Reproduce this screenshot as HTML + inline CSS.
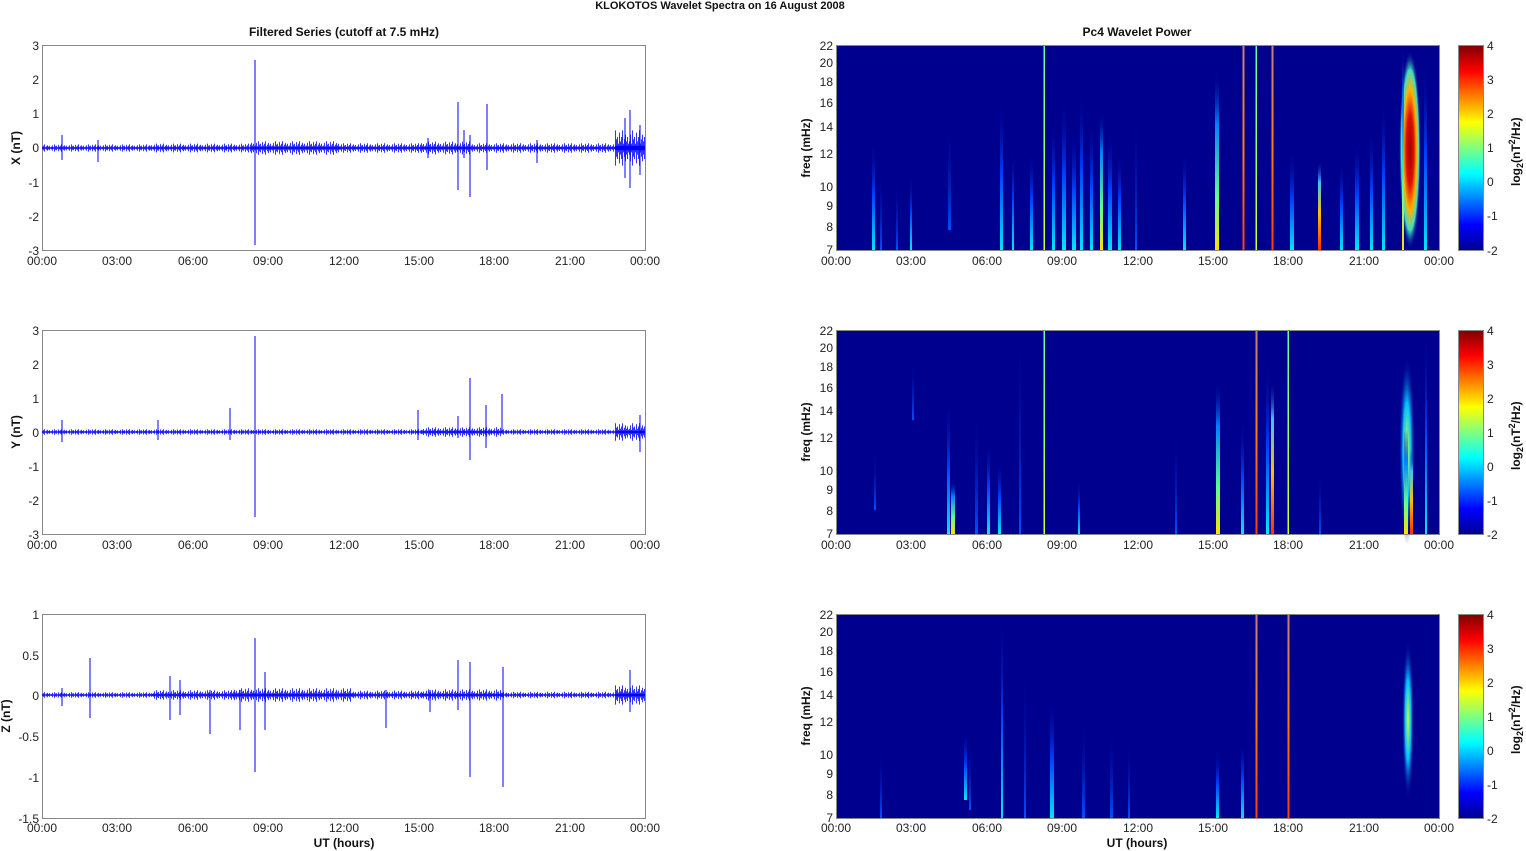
<!DOCTYPE html>
<html><head><meta charset="utf-8">
<style>
html,body{margin:0;padding:0;background:#fff;}
svg{display:block;font-family:"Liberation Sans",Arial,sans-serif;}
.t{font-size:12px;fill:#222;}
.b{font-size:12px;font-weight:bold;fill:#111;}
</style></head><body>
<svg width="1526" height="851" viewBox="0 0 1526 851" xmlns="http://www.w3.org/2000/svg">
<defs>
<pattern id="nz" x="0" y="-15" width="17" height="30" patternUnits="userSpaceOnUse">
<path stroke="#0000ff" stroke-width="0.8" fill="none" d="M0.5,12V18 M1.5,9V21 M2.5,13V17 M3.5,7V23 M4.5,11V19 M5.5,10V20 M6.5,13V17 M7.5,8V22 M8.5,12V18 M9.5,10V20 M10.5,7V23 M11.5,13V17 M12.5,11V19 M13.5,9V21 M14.5,12V18 M15.5,10V20 M16.5,13V17"/>
<rect x="0" y="14" width="17" height="2" fill="#0000ff"/>
</pattern>
<linearGradient id="gc" x1="0" y1="0" x2="0" y2="1"><stop offset="0" stop-color="#00008f" stop-opacity="0"/><stop offset="0.5" stop-color="#0040ff"/><stop offset="1" stop-color="#00e8ff"/></linearGradient>
<linearGradient id="gb" x1="0" y1="0" x2="0" y2="1"><stop offset="0" stop-color="#00008f" stop-opacity="0"/><stop offset="1" stop-color="#0050ff"/></linearGradient>
<linearGradient id="gy" x1="0" y1="0" x2="0" y2="1"><stop offset="0" stop-color="#00008f" stop-opacity="0"/><stop offset="0.3" stop-color="#0080ff"/><stop offset="0.7" stop-color="#60ff90"/><stop offset="1" stop-color="#ffe000"/></linearGradient>
<linearGradient id="gr" x1="0" y1="0" x2="0" y2="1"><stop offset="0" stop-color="#00008f" stop-opacity="0"/><stop offset="0.25" stop-color="#40c0ff"/><stop offset="0.6" stop-color="#ffc000"/><stop offset="1" stop-color="#ff3000"/></linearGradient>
<linearGradient id="gl" x1="0" y1="0" x2="0" y2="1"><stop offset="0" stop-color="#60ffa0"/><stop offset="1" stop-color="#d0ff30"/></linearGradient>
<linearGradient id="glr" x1="0" y1="0" x2="0" y2="1"><stop offset="0" stop-color="#c08080"/><stop offset="0.5" stop-color="#ff8000"/><stop offset="1" stop-color="#ff4000"/></linearGradient>
<radialGradient id="gblob" cx="0.5" cy="0.5" r="0.5"><stop offset="0" stop-color="#a00000"/><stop offset="0.35" stop-color="#e01000"/><stop offset="0.6" stop-color="#ffb000"/><stop offset="0.8" stop-color="#40e0c0"/><stop offset="1" stop-color="#00008f" stop-opacity="0"/></radialGradient>
<radialGradient id="gblobc" cx="0.5" cy="0.5" r="0.5"><stop offset="0" stop-color="#c0ff40"/><stop offset="0.5" stop-color="#00c0ff"/><stop offset="1" stop-color="#00008f" stop-opacity="0"/></radialGradient>
<linearGradient id="jet" x1="0" y1="1" x2="0" y2="0"><stop offset="0" stop-color="#00008f"/><stop offset="0.125" stop-color="#0000ff"/><stop offset="0.375" stop-color="#00ffff"/><stop offset="0.625" stop-color="#ffff00"/><stop offset="0.875" stop-color="#ff0000"/><stop offset="1" stop-color="#800000"/></linearGradient>
</defs>

<text x="720" y="9" text-anchor="middle" style="font-size:11px;font-weight:bold;fill:#111">KLOKOTOS Wavelet Spectra on 16 August    2008</text>
<text x="344" y="36" text-anchor="middle" class="b">Filtered Series (cutoff at 7.5 mHz)</text>
<text x="1137" y="36" text-anchor="middle" class="b">Pc4 Wavelet Power</text>

<g stroke="#888" fill="none" stroke-width="1">
<rect x="42.5" y="45.5" width="603" height="205"/>
<rect x="42.5" y="330.5" width="603" height="204"/>
<rect x="42.5" y="614.5" width="603" height="204"/>
</g>
<!-- panel 1 -->
<g transform="translate(0,148)">
<g transform="scale(1,0.45)"><rect x="42" y="-15" width="108" height="30" fill="url(#nz)"/></g>
<g transform="scale(1,0.55)"><rect x="150" y="-15" width="100" height="30" fill="url(#nz)"/></g>
<g transform="scale(1,0.85)"><rect x="250" y="-15" width="90" height="30" fill="url(#nz)"/></g>
<g transform="scale(1,0.6)"><rect x="340" y="-15" width="80" height="30" fill="url(#nz)"/></g>
<g transform="scale(1,0.8)"><rect x="420" y="-15" width="50" height="30" fill="url(#nz)"/></g>
<g transform="scale(1,0.6)"><rect x="470" y="-15" width="145" height="30" fill="url(#nz)"/></g>
<g transform="scale(1,2.2)"><rect x="615" y="-15" width="30" height="30" fill="url(#nz)"/></g>
</g>
<path fill="none" stroke="#0000ff" stroke-width="1" d="M255,60V245 M62,135V160 M98,140V162 M458,102V190 M470,135V197 M487,104V170 M464,130V158 M428,138V158 M537,140V163 M630,110V188 M625,118V178 M640,125V175"/>
<!-- panel 2 -->
<g transform="translate(0,432)">
<g transform="scale(1,0.35)"><rect x="42" y="-15" width="380" height="30" fill="url(#nz)"/></g>
<g transform="scale(1,0.6)"><rect x="422" y="-15" width="80" height="30" fill="url(#nz)"/></g>
<g transform="scale(1,0.35)"><rect x="502" y="-15" width="113" height="30" fill="url(#nz)"/></g>
<g transform="scale(1,1.1)"><rect x="615" y="-15" width="30" height="30" fill="url(#nz)"/></g>
</g>
<path fill="none" stroke="#0000ff" stroke-width="1" d="M255,336V517 M62,420V442 M158,420V440 M230,408V440 M470,378V460 M486,405V448 M502,394V432 M418,410V440 M458,416V438 M640,415V452"/>
<!-- panel 3 -->
<g transform="translate(0,695)">
<g transform="scale(1,0.35)"><rect x="42" y="-15" width="110" height="30" fill="url(#nz)"/></g>
<g transform="scale(1,0.6)"><rect x="152" y="-15" width="80" height="30" fill="url(#nz)"/></g>
<g transform="scale(1,0.85)"><rect x="232" y="-15" width="120" height="30" fill="url(#nz)"/></g>
<g transform="scale(1,0.55)"><rect x="352" y="-15" width="70" height="30" fill="url(#nz)"/></g>
<g transform="scale(1,0.7)"><rect x="422" y="-15" width="80" height="30" fill="url(#nz)"/></g>
<g transform="scale(1,0.4)"><rect x="502" y="-15" width="113" height="30" fill="url(#nz)"/></g>
<g transform="scale(1,1.2)"><rect x="615" y="-15" width="30" height="30" fill="url(#nz)"/></g>
</g>
<path fill="none" stroke="#0000ff" stroke-width="1" d="M255,638V772 M90,658V718 M62,688V706 M170,676V720 M180,680V715 M210,690V734 M240,690V730 M265,672V730 M458,660V710 M470,662V777 M503,667V787 M430,690V712 M386,690V728 M630,670V712"/>

<g class="t" text-anchor="middle">
<text x="42" y="265">00:00</text><text x="117" y="265">03:00</text><text x="193" y="265">06:00</text><text x="268" y="265">09:00</text><text x="344" y="265">12:00</text><text x="419" y="265">15:00</text><text x="494" y="265">18:00</text><text x="570" y="265">21:00</text><text x="645" y="265">00:00</text>
<text x="42" y="549">00:00</text><text x="117" y="549">03:00</text><text x="193" y="549">06:00</text><text x="268" y="549">09:00</text><text x="344" y="549">12:00</text><text x="419" y="549">15:00</text><text x="494" y="549">18:00</text><text x="570" y="549">21:00</text><text x="645" y="549">00:00</text>
<text x="42" y="832">00:00</text><text x="117" y="832">03:00</text><text x="193" y="832">06:00</text><text x="268" y="832">09:00</text><text x="344" y="832">12:00</text><text x="419" y="832">15:00</text><text x="494" y="832">18:00</text><text x="570" y="832">21:00</text><text x="645" y="832">00:00</text>
</g>
<g class="t" text-anchor="end">
<text x="39" y="50">3</text><text x="39" y="84">2</text><text x="39" y="118">1</text><text x="39" y="152">0</text><text x="39" y="187">-1</text><text x="39" y="221">-2</text><text x="39" y="255">-3</text>
<text x="39" y="335">3</text><text x="39" y="369">2</text><text x="39" y="403">1</text><text x="39" y="437">0</text><text x="39" y="471">-1</text><text x="39" y="505">-2</text><text x="39" y="539">-3</text>
<text x="39" y="619">1</text><text x="39" y="660">0.5</text><text x="39" y="700">0</text><text x="39" y="741">-0.5</text><text x="39" y="782">-1</text><text x="39" y="823">-1.5</text>
</g>
<text class="b" transform="translate(20,148) rotate(-90)" text-anchor="middle">X (nT)</text>
<text class="b" transform="translate(20,432) rotate(-90)" text-anchor="middle">Y (nT)</text>
<text class="b" transform="translate(10,716) rotate(-90)" text-anchor="middle">Z (nT)</text>
<text class="b" x="344" y="847" text-anchor="middle">UT (hours)</text>
<text class="b" x="1137" y="847" text-anchor="middle">UT (hours)</text>

<!-- RIGHT PANELS -->
<rect x="836" y="45" width="603" height="205" fill="#00008f"/>
<rect x="872" y="140" width="3" height="110" fill="url(#gc)"/>
<rect x="880" y="170" width="2" height="80" fill="url(#gb)"/>
<rect x="896" y="180" width="2" height="70" fill="url(#gb)"/>
<rect x="910" y="175" width="2" height="75" fill="url(#gc)"/>
<rect x="948" y="120" width="3" height="110" fill="url(#gb)"/>
<rect x="1000" y="100" width="3" height="150" fill="url(#gc)"/>
<rect x="1012" y="150" width="2" height="100" fill="url(#gc)"/>
<rect x="1030" y="150" width="3" height="100" fill="url(#gc)"/>
<rect x="1043.5" y="45" width="1.5" height="205" fill="url(#gl)"/>
<rect x="1052" y="120" width="3" height="130" fill="url(#gc)"/>
<rect x="1062" y="100" width="4" height="150" fill="url(#gc)"/>
<rect x="1072" y="130" width="4" height="120" fill="url(#gc)"/>
<rect x="1080" y="90" width="3" height="160" fill="url(#gc)"/>
<rect x="1090" y="120" width="3" height="130" fill="url(#gc)"/>
<rect x="1100" y="110" width="3" height="140" fill="url(#gy)"/>
<rect x="1108" y="130" width="4" height="120" fill="url(#gc)"/>
<rect x="1118" y="150" width="3" height="100" fill="url(#gc)"/>
<rect x="1135" y="110" width="2" height="140" fill="url(#gb)"/>
<rect x="1183" y="150" width="3" height="100" fill="url(#gc)"/>
<rect x="1215" y="70" width="4" height="180" fill="url(#gy)"/>
<rect x="1242.5" y="45" width="2" height="205" fill="url(#glr)"/>
<rect x="1255.5" y="45" width="1.5" height="205" fill="url(#gl)"/>
<rect x="1271.5" y="45" width="2" height="205" fill="url(#glr)"/>
<rect x="1290" y="150" width="4" height="100" fill="url(#gc)"/>
<rect x="1318" y="160" width="3" height="90" fill="url(#gr)"/>
<rect x="1340" y="160" width="3" height="90" fill="url(#gc)"/>
<rect x="1355" y="140" width="4" height="110" fill="url(#gc)"/>
<rect x="1370" y="130" width="3" height="120" fill="url(#gc)"/>
<rect x="1382" y="100" width="3" height="150" fill="url(#gc)"/>
<ellipse cx="1410" cy="150" rx="11" ry="100" fill="url(#gblob)"/>
<rect x="1402" y="45" width="2" height="205" fill="url(#gy)"/>
<rect x="1424" y="60" width="3" height="190" fill="url(#gc)"/>

<rect x="836" y="330" width="603" height="204" fill="#00008f"/>
<rect x="874" y="450" width="2" height="60" fill="url(#gb)"/>
<rect x="912" y="360" width="2" height="60" fill="url(#gb)"/>
<rect x="947" y="400" width="3" height="134" fill="url(#gc)"/>
<rect x="951" y="480" width="4" height="54" fill="url(#gy)"/>
<rect x="975" y="410" width="3" height="124" fill="url(#gb)"/>
<rect x="987" y="440" width="3" height="94" fill="url(#gc)"/>
<rect x="998" y="460" width="3" height="74" fill="url(#gc)"/>
<rect x="1019" y="330" width="2" height="204" fill="url(#gb)"/>
<rect x="1043.5" y="330" width="1.5" height="204" fill="url(#gl)"/>
<rect x="1078" y="480" width="2" height="54" fill="url(#gc)"/>
<rect x="1175" y="430" width="2" height="104" fill="url(#gb)"/>
<rect x="1216" y="380" width="4" height="154" fill="url(#gy)"/>
<rect x="1241" y="420" width="3" height="114" fill="url(#gc)"/>
<rect x="1255.5" y="330" width="2" height="204" fill="url(#glr)"/>
<rect x="1266" y="360" width="3" height="174" fill="url(#gc)"/>
<rect x="1271" y="380" width="3" height="154" fill="url(#gr)"/>
<rect x="1287.5" y="330" width="1.5" height="204" fill="url(#gl)"/>
<rect x="1319" y="470" width="2" height="64" fill="url(#gb)"/>
<ellipse cx="1407" cy="450" rx="8" ry="95" fill="url(#gblobc)"/>
<rect x="1404" y="430" width="4" height="104" fill="url(#gy)"/>
<rect x="1410" y="450" width="3" height="84" fill="url(#gr)"/>
<rect x="1425" y="330" width="2" height="204" fill="url(#gc)"/>

<rect x="836" y="614" width="603" height="204" fill="#00008f"/>
<rect x="880" y="750" width="2" height="68" fill="url(#gb)"/>
<rect x="964" y="730" width="3" height="70" fill="url(#gc)"/>
<rect x="969" y="740" width="2" height="70" fill="url(#gb)"/>
<rect x="1001" y="614" width="2" height="204" fill="url(#gc)"/>
<rect x="1024" y="670" width="2" height="148" fill="url(#gb)"/>
<rect x="1050" y="700" width="4" height="118" fill="url(#gc)"/>
<rect x="1082" y="720" width="3" height="98" fill="url(#gb)"/>
<rect x="1110" y="730" width="3" height="88" fill="url(#gb)"/>
<rect x="1128" y="740" width="2" height="78" fill="url(#gb)"/>
<rect x="1216" y="750" width="3" height="68" fill="url(#gc)"/>
<rect x="1241" y="740" width="3" height="78" fill="url(#gc)"/>
<rect x="1255.5" y="614" width="2" height="204" fill="url(#glr)"/>
<rect x="1287.5" y="614" width="2" height="204" fill="url(#glr)"/>
<ellipse cx="1408" cy="720" rx="6" ry="80" fill="url(#gblobc)"/>

<g stroke="#888" fill="none">
<rect x="836.5" y="45.5" width="603" height="205"/>
<rect x="836.5" y="330.5" width="603" height="204"/>
<rect x="836.5" y="614.5" width="603" height="204"/>
</g>
<g class="t" text-anchor="middle">
<text x="836" y="265">00:00</text><text x="911" y="265">03:00</text><text x="987" y="265">06:00</text><text x="1062" y="265">09:00</text><text x="1138" y="265">12:00</text><text x="1213" y="265">15:00</text><text x="1288" y="265">18:00</text><text x="1364" y="265">21:00</text><text x="1439" y="265">00:00</text>
<text x="836" y="549">00:00</text><text x="911" y="549">03:00</text><text x="987" y="549">06:00</text><text x="1062" y="549">09:00</text><text x="1138" y="549">12:00</text><text x="1213" y="549">15:00</text><text x="1288" y="549">18:00</text><text x="1364" y="549">21:00</text><text x="1439" y="549">00:00</text>
<text x="836" y="832">00:00</text><text x="911" y="832">03:00</text><text x="987" y="832">06:00</text><text x="1062" y="832">09:00</text><text x="1138" y="832">12:00</text><text x="1213" y="832">15:00</text><text x="1288" y="832">18:00</text><text x="1364" y="832">21:00</text><text x="1439" y="832">00:00</text>
</g>
<g class="t" text-anchor="end">
<text x="833" y="50">22</text><text x="833" y="67">20</text><text x="833" y="86">18</text><text x="833" y="107">16</text><text x="833" y="131">14</text><text x="833" y="158">12</text><text x="833" y="191">10</text><text x="833" y="210">9</text><text x="833" y="231">8</text><text x="833" y="254">7</text>
<text x="833" y="335">22</text><text x="833" y="352">20</text><text x="833" y="371">18</text><text x="833" y="392">16</text><text x="833" y="415">14</text><text x="833" y="442">12</text><text x="833" y="475">10</text><text x="833" y="494">9</text><text x="833" y="515">8</text><text x="833" y="538">7</text>
<text x="833" y="619">22</text><text x="833" y="636">20</text><text x="833" y="655">18</text><text x="833" y="676">16</text><text x="833" y="699">14</text><text x="833" y="726">12</text><text x="833" y="759">10</text><text x="833" y="778">9</text><text x="833" y="799">8</text><text x="833" y="822">7</text>
</g>
<text class="b" transform="translate(810,148) rotate(-90)" text-anchor="middle">freq (mHz)</text>
<text class="b" transform="translate(810,432) rotate(-90)" text-anchor="middle">freq (mHz)</text>
<text class="b" transform="translate(810,716) rotate(-90)" text-anchor="middle">freq (mHz)</text>

<g stroke="#888">
<rect x="1458.5" y="45.5" width="25" height="205" fill="url(#jet)"/>
<rect x="1458.5" y="330.5" width="25" height="204" fill="url(#jet)"/>
<rect x="1458.5" y="614.5" width="25" height="204" fill="url(#jet)"/>
</g>
<g class="t">
<text x="1487" y="50">4</text><text x="1487" y="84">3</text><text x="1487" y="118">2</text><text x="1487" y="152">1</text><text x="1487" y="186">0</text><text x="1487" y="220">-1</text><text x="1487" y="255">-2</text>
<text x="1487" y="335">4</text><text x="1487" y="369">3</text><text x="1487" y="403">2</text><text x="1487" y="437">1</text><text x="1487" y="471">0</text><text x="1487" y="505">-1</text><text x="1487" y="539">-2</text>
<text x="1487" y="619">4</text><text x="1487" y="653">3</text><text x="1487" y="687">2</text><text x="1487" y="721">1</text><text x="1487" y="755">0</text><text x="1487" y="789">-1</text><text x="1487" y="823">-2</text>
</g>
<g class="b">
<text transform="translate(1520,186) rotate(-90)">log<tspan dy="3" font-size="9">2</tspan><tspan dy="-3">(nT</tspan><tspan dy="-5" font-size="9">2</tspan><tspan dy="5">/Hz)</tspan></text>
<text transform="translate(1520,470) rotate(-90)">log<tspan dy="3" font-size="9">2</tspan><tspan dy="-3">(nT</tspan><tspan dy="-5" font-size="9">2</tspan><tspan dy="5">/Hz)</tspan></text>
<text transform="translate(1520,754) rotate(-90)">log<tspan dy="3" font-size="9">2</tspan><tspan dy="-3">(nT</tspan><tspan dy="-5" font-size="9">2</tspan><tspan dy="5">/Hz)</tspan></text>
</g>
</svg>
</body></html>
